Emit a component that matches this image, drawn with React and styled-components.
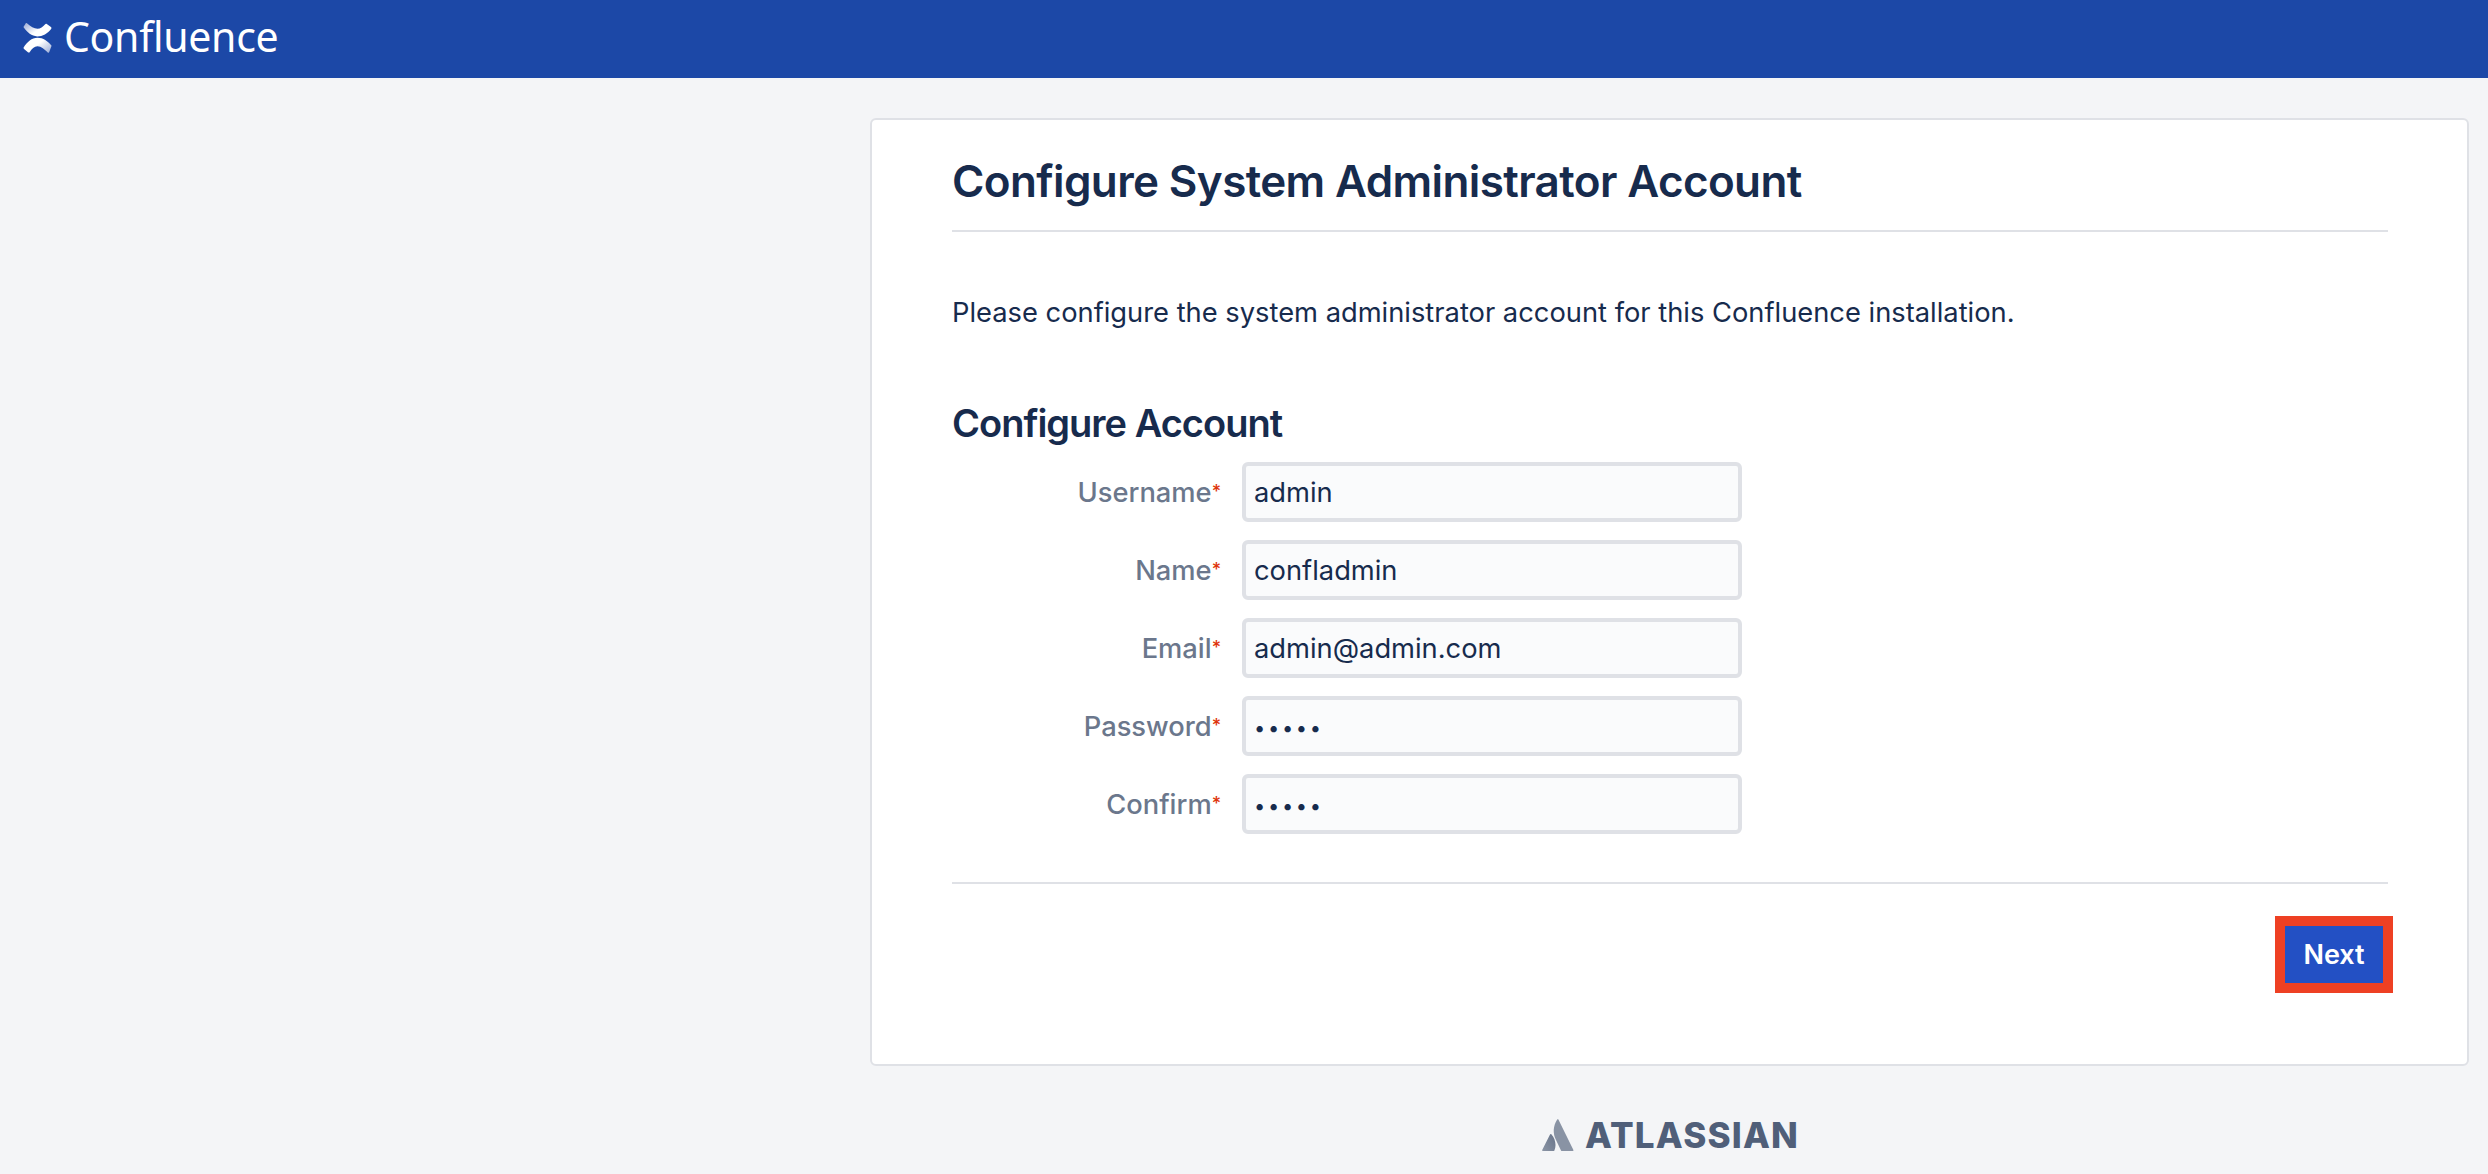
import React from 'react';
import styled, { createGlobalStyle } from 'styled-components';

const fields = [
  { label: 'Username', value: 'admin', type: 'text' },
  { label: 'Name', value: 'confladmin', type: 'text' },
  { label: 'Email', value: 'admin@admin.com', type: 'text' },
  { label: 'Password', value: 'admin', type: 'password' },
  { label: 'Confirm', value: 'admin', type: 'password' },
];

const ConfluenceLogo = () => (
  <svg width="31" height="32" viewBox="18 22 96 100">
    <defs>
      <linearGradient id="cfTop" x1="1" y1="0.8" x2="0" y2="0.1">
        <stop offset="0" stopColor="#ffffff" />
        <stop offset="0.45" stopColor="#ffffff" />
        <stop offset="1" stopColor="#9fafd8" />
      </linearGradient>
      <linearGradient id="cfBottom" x1="0" y1="0.2" x2="1" y2="0.9">
        <stop offset="0" stopColor="#ffffff" />
        <stop offset="0.45" stopColor="#ffffff" />
        <stop offset="1" stopColor="#9fafd8" />
      </linearGradient>
    </defs>
    <path d="M22 38 L28 28 C29 25 31 25 33 26 C45 36 55 43 66 43 C75 43 83 37 90 29 C91 27 93 27 95 28 L108 38 C110 40 110 41 109 43 C98 58 82 67 65 67 C48 67 34 55 22 38 Z" fill="url(#cfTop)" />
    <path d="M110 96 L103 115 C102 118 100 119 98 117 C88 108 78 98 66 98 C56 98 48 106 42 116 C41 118 39 118 37 117 L24 106 C22 104 22 103 23 101 C34 84 48 71 66 71 C84 71 98 82 110 96 Z" fill="url(#cfBottom)" />
  </svg>
);

const AtlassianMark = () => (
  <svg width="32" height="32" viewBox="0 0 32 32">
    <defs>
      <linearGradient id="atFoot" x1="1" y1="0.2" x2="0.1" y2="1">
        <stop offset="0" stopColor="#6b778c" />
        <stop offset="1" stopColor="#8993a4" />
      </linearGradient>
    </defs>
    <path d="M9.5 15.5 C9 14.9 8.3 15 7.9 15.7 L.2 31 C-.1 31.5 .3 32 .8 32 H11.5 C11.9 32 12.2 31.8 12.4 31.4 C14.7 26.6 13.3 19.5 9.5 15.5 Z" fill="url(#atFoot)" />
    <path d="M15.2 .5 C11 7 10.7 14.5 14 21 L19 31.4 C19.2 31.8 19.5 32 20 32 H30.7 C31.3 32 31.6 31.5 31.4 31 L16.4 .5 C16.1 0 15.5 0 15.2 .5 Z" fill="#8993a4" />
  </svg>
);

const App = () => (
  <>
    <GlobalStyle />
    <Header>
      <ConfluenceLogo />
      <Brand>Confluence</Brand>
    </Header>
    <Main>
      <Card>
        <Title>Configure System Administrator Account</Title>
        <Intro>Please configure the system administrator account for this Confluence installation.</Intro>
        <SectionTitle>Configure Account</SectionTitle>
        <Form>
          {fields.map((f) => (
            <Row key={f.label}>
              <Label>
                {f.label}
                <Required>*</Required>
              </Label>
              <Input type={f.type} defaultValue={f.value} readOnly $masked={f.type === 'password'} />
            </Row>
          ))}
        </Form>
        <Actions>
          <NextButton type="button">Next</NextButton>
        </Actions>
      </Card>
      <Footer>
        <AtlassianMark />
        <FooterBrand>ATLASSIAN</FooterBrand>
      </Footer>
    </Main>
  </>
);

const GlobalStyle = createGlobalStyle`
  html, body {
    margin: 0;
    height: 100%;
    overflow: hidden;
    background: #f4f5f7;
  }
  * {
    box-sizing: border-box;
  }
`;

const Header = styled.header`
  display: flex;
  align-items: center;
  gap: 11px;
  height: 78px;
  padding: 0 0 3px 22px;
  background: #1c48a7;
`;

const Brand = styled.span`
  margin-bottom: 4px;
  font-family: "Noto Sans", sans-serif;
  font-size: 41px;
  font-weight: 400;
  color: #fff;
  letter-spacing: -0.3px;
`;

const Main = styled.main`
  margin-left: 870px;
  width: 1599px;
  padding-top: 40px;
`;

const Card = styled.section`
  height: 948px;
  padding: 0 79px 0 80px;
  background: #fff;
  border: 2px solid #dfe1e6;
  border-radius: 6px;
  font-family: Inter, sans-serif;
  color: #172b4d;
`;

const Title = styled.h1`
  margin: 0;
  height: 112px;
  padding-top: 31px;
  border-bottom: 2px solid #dfe1e6;
  font-size: 44px;
  line-height: 60px;
  font-weight: 600;
  letter-spacing: -0.62px;
  color: #172b4d;
`;

const Intro = styled.p`
  margin: 61px 0 0;
  font-size: 27.3px;
  line-height: 40px;
`;

const SectionTitle = styled.h2`
  margin: 65px 0 0;
  font-size: 38px;
  line-height: 50px;
  font-weight: 600;
  letter-spacing: -1px;
`;

const Form = styled.div`
  display: flex;
  flex-direction: column;
  gap: 18px;
  margin-top: 14px;
  padding-bottom: 48px;
  border-bottom: 2px solid #dfe1e6;
`;

const Row = styled.div`
  display: flex;
  align-items: center;
  gap: 21px;
`;

const Label = styled.label`
  width: 269px;
  text-align: right;
  font-size: 27.3px;
  font-weight: 500;
  color: #6b778c;
`;

const Required = styled.span`
  position: relative;
  top: -4px;
  font-size: 18px;
  color: #de350b;
`;

const Input = styled.input`
  width: 500px;
  height: 60px;
  padding: ${(p) => (p.$masked ? '4px 8px 0' : '0 8px')};
  background: #fafbfc;
  border: 4px solid #dfe1e6;
  border-radius: 6px;
  outline: none;
  font-family: Inter, sans-serif;
  font-size: ${(p) => (p.$masked ? '20px' : '27.3px')};
  color: #172b4d;
  letter-spacing: ${(p) => (p.$masked ? '2.7px' : '0')};
`;

const Actions = styled.div`
  display: flex;
  justify-content: flex-end;
  margin: 32px -5px 0 0;
`;

const NextButton = styled.button`
  width: 118px;
  height: 77px;
  padding: 0;
  background: #2350c4;
  border: 10px solid #ee4023;
  color: #fff;
  font-family: Inter, sans-serif;
  font-size: 27px;
  font-weight: 600;
`;

const Footer = styled.footer`
  display: flex;
  align-items: flex-end;
  justify-content: center;
  gap: 11px;
  margin: 53px 0 0 2px;
`;

const FooterBrand = styled.span`
  font-family: Inter, sans-serif;
  font-size: 35px;
  line-height: 32px;
  font-weight: 800;
  letter-spacing: 1.2px;
  color: #505f79;
`;

export default App;
